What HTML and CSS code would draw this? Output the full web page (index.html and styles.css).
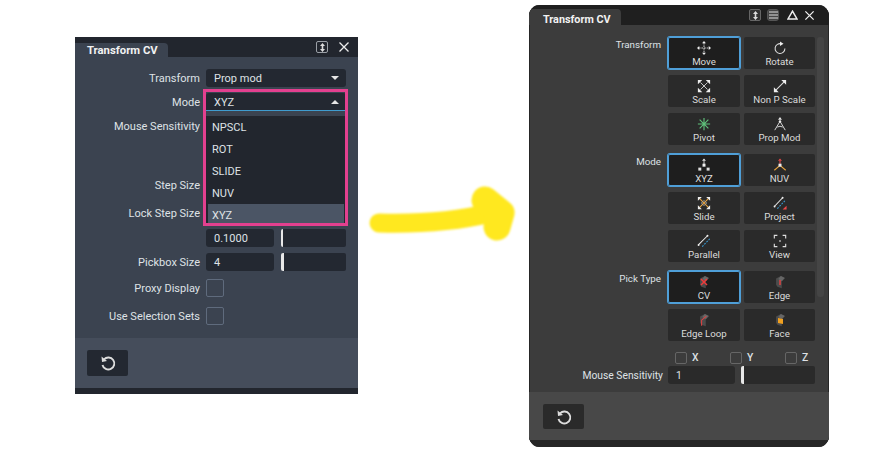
FILE: index.html
```html
<!DOCTYPE html>
<html lang="en">
<head>
    <meta charset="UTF-8">
    <title>Transform CV</title>
    <link rel="stylesheet" href="styles.css">
</head>
<body>
    <svg class="defs" width="0" height="0">
        <symbol id="i-move" viewBox="0 0 16 16">
            <path d="M8 2v12M2 8h12" stroke="#e8e8e8" stroke-width="1" stroke-dasharray="2 1"/>
            <path d="M8 0l2.200 2.600H5.800zM8 16l2.200-2.600H5.800zM0 8l2.600-2.200v4.400zM16 8l-2.600-2.200v4.400z" fill="#eee"/>
        </symbol>
        <symbol id="i-rotate" viewBox="0 0 16 16">
            <path d="M9.500 3.200A5.600 5.600 0 1 0 13.600 8.500" fill="none" stroke="#ddd" stroke-width="1.200"/>
            <path d="M8 0.500l4 2.700-4 2.500z" fill="#eee"/>
        </symbol>
        <symbol id="i-scale" viewBox="0 0 16 16">
            <path d="M4 4l8 8M12 4l-8 8" stroke="#ddd" stroke-width="1"/>
            <path d="M1 1h5L1 6zM15 1h-5l5 5zM1 15h5l-5-5zM15 15h-5l5-5z" fill="#eee"/>
        </symbol>
        <symbol id="i-nonp" viewBox="0 0 16 16">
            <path d="M3 13L13 3" stroke="#ddd" stroke-width="1.200"/>
            <path d="M15 1v5.500L9.500 1zM1 15V9.500L6.500 15z" fill="#eee"/>
        </symbol>
        <symbol id="i-pivot" viewBox="0 0 16 16">
            <path d="M8 1v14M1 8h14M3 3l10 10M13 3L3 13" stroke="#5fc07a" stroke-width="1.300"/>
        </symbol>
        <symbol id="i-prop" viewBox="0 0 16 16">
            <path d="M8 5L2 15M8 5l6 10M5 11.500q3-2 6 0" fill="none" stroke="#ddd" stroke-width="1.100"/>
            <path d="M8 0l2.200 3H5.800z" fill="#eee"/><circle cx="8" cy="5" r="1.400" fill="#eee"/>
        </symbol>
        <symbol id="i-xyz" viewBox="0 0 16 16">
            <path d="M8 0.500l2.200 2.500H5.800z" fill="#eee"/><path d="M8 3v5" stroke="#ddd"/>
            <rect x="6.300" y="6.500" width="3.400" height="3.400" fill="#eee"/>
            <rect x="1.500" y="11" width="3.400" height="3.400" fill="#ddd"/>
            <rect x="11" y="11" width="3.400" height="3.400" fill="#ddd"/>
        </symbol>
        <symbol id="i-nuv" viewBox="0 0 16 16">
            <path d="M8 0.500l2.200 2.500H5.800z" fill="#ee4a4a"/><path d="M8 3v5" stroke="#ee4a4a" stroke-width="1.200"/>
            <path d="M8 8.500L1.500 14M8 8.500l6.500 5.500" stroke="#e8a33d" stroke-width="1.300"/>
            <rect x="6.300" y="6.500" width="3.400" height="3.400" fill="#eee"/>
        </symbol>
        <symbol id="i-slide" viewBox="0 0 16 16">
            <path d="M3 3l10 10M13 3L3 13" stroke="#e8a33d" stroke-width="1.300"/>
            <path d="M1 1h4.500L1 5.500zM15 1h-4.500L15 5.500zM1 15h4.500L1 10.500zM15 15h-4.500L15 10.500z" fill="#eee"/>
            <path d="M5 8L8 5l3 3-3 3z" fill="none" stroke="#aaa"/>
        </symbol>
        <symbol id="i-project" viewBox="0 0 16 16">
            <path d="M1.500 12L11 2" stroke="#eee" stroke-width="1.200"/>
            <path d="M5 14.500L14 5" stroke="#3ba0dc" stroke-width="1.200" stroke-dasharray="2 1.500"/>
            <path d="M15.500 15.500v-4.500l-4.500 4.500z" fill="#ee4a4a"/>
            <circle cx="1.800" cy="12" r="1.100" fill="#eee"/><circle cx="11" cy="2" r="1.100" fill="#eee"/>
        </symbol>
        <symbol id="i-parallel" viewBox="0 0 16 16">
            <path d="M1.500 12.500L12 2" stroke="#eee" stroke-width="1.200"/>
            <path d="M6 14.500L15 5" stroke="#3ba0dc" stroke-width="1.200" stroke-dasharray="2 1.500"/>
            <circle cx="1.800" cy="12.500" r="1.100" fill="#eee"/><circle cx="12" cy="2" r="1.100" fill="#eee"/>
        </symbol>
        <symbol id="i-view" viewBox="0 0 16 16">
            <path d="M1.500 5V1.500H5M11 1.500h3.500V5M1.500 11v3.500H5M11 14.500h3.500V11" fill="none" stroke="#ddd" stroke-width="1.300"/>
            <rect x="7.200" y="7.200" width="1.600" height="1.600" fill="#eee"/>
        </symbol>
        <symbol id="i-block" viewBox="0 0 16 16">
            <path d="M3.500 4L9 1l4.500 2.500L10 7v8L5 13.500 3.500 11z" fill="#4c4c4c"/>
            <path d="M9 1l4.500 2.500L10 7 6 4.500z" fill="#666"/>
        </symbol>
        <symbol id="i-reset" viewBox="0 0 18 18">
            <path d="M5 5.300A6 6 0 1 1 3.500 11" fill="none" stroke="#ddd" stroke-width="1.900"/>
            <path d="M2.500 2.500l0.500 5.500 5-1z" fill="#ddd"/>
        </symbol>
    </svg>

    <!-- left window -->
    <div class="window window-left">
        <div class="titlebar">
            <div class="tab">Transform CV</div>
            <div class="title-icons">
                <span class="pin-box"><svg width="7" height="9" viewBox="0 0 7 9"><path d="M3.500 0l2.500 3H1zM3.500 9L1 6h5zM2.700 3h1.600v3H2.700z" fill="#ddd"/></svg></span>
                <svg width="12" height="12" viewBox="0 0 12 12"><path d="M1.500 1.500l9 9M10.500 1.500l-9 9" stroke="#eee" stroke-width="1.300"/></svg>
            </div>
        </div>
        <div class="form">
            <div class="row">
                <label>Transform</label>
                <div class="select">Prop mod<span class="caret"></span></div>
            </div>
            <div class="row">
                <label>Mode</label>
                <div class="select select-open">XYZ<span class="caret caret-up"></span>
                    <div class="highlight">
                        <ul class="options">
                            <li>NPSCL</li>
                            <li>ROT</li>
                            <li>SLIDE</li>
                            <li>NUV</li>
                            <li class="current">XYZ</li>
                        </ul>
                    </div>
                </div>
            </div>
            <div class="row row-sens"><label>Mouse Sensitivity</label></div>
            <div class="row row-step"><label>Step Size</label></div>
            <div class="row row-lock"><label>Lock Step Size</label></div>
            <div class="row">
                <label></label>
                <div class="input">0.1000</div>
                <div class="slider"></div>
            </div>
            <div class="row row-pick">
                <label>Pickbox Size</label>
                <div class="input">4</div>
                <div class="slider slider-thick"></div>
            </div>
            <div class="row row-check">
                <label>Proxy Display</label>
                <span class="check"></span>
            </div>
            <div class="row">
                <label>Use Selection Sets</label>
                <span class="check"></span>
            </div>
        </div>
        <div class="footer">
            <button class="reset"><svg width="18" height="18"><use href="#i-reset"/></svg></button>
        </div>
    </div>

    <!-- yellow marker arrow -->
    <svg class="arrow" width="150" height="66" viewBox="0 0 150 66">
        <path d="M11 45C50 46 90 43 122 35" fill="none" stroke="#ffe81f" stroke-width="19" stroke-linecap="round"/>
        <path d="M117 22L133 35L129 49" fill="none" stroke="#ffe81f" stroke-width="27" stroke-linecap="round" stroke-linejoin="round"/>
    </svg>

    <!-- right window -->
    <div class="window window-right">
        <div class="titlebar">
            <div class="tab">Transform CV</div>
            <div class="title-icons">
                <span class="pin-box"><svg width="7" height="9" viewBox="0 0 7 9"><path d="M3.500 0l2.500 3H1zM3.500 9L1 6h5zM2.700 3h1.600v3H2.700z" fill="#ddd"/></svg></span>
                <span class="pin-box menu-box"><svg width="9" height="8" viewBox="0 0 9 8"><path d="M0 1h9M0 4h9M0 7h9" stroke="#ddd" stroke-width="1.200"/></svg></span>
                <svg class="tri" width="11" height="10" viewBox="0 0 11 10"><path d="M5.500 1.200L10 9H1z" fill="none" stroke="#eee" stroke-width="1.500"/></svg>
                <svg width="11" height="11" viewBox="0 0 12 12"><path d="M1.500 1.500l9 9M10.500 1.500l-9 9" stroke="#eee" stroke-width="1.400"/></svg>
            </div>
        </div>
        <div class="tool-body">
            <div class="scrollbar"></div>
            <div class="tools">
                <span class="group-label">Transform</span>
                <div class="btn-grid">
                    <button class="tool selected"><svg><use href="#i-move"/></svg>Move</button>
                    <button class="tool"><svg><use href="#i-rotate"/></svg>Rotate</button>
                    <button class="tool"><svg><use href="#i-scale"/></svg>Scale</button>
                    <button class="tool"><svg><use href="#i-nonp"/></svg>Non P Scale</button>
                    <button class="tool"><svg><use href="#i-pivot"/></svg>Pivot</button>
                    <button class="tool"><svg><use href="#i-prop"/></svg>Prop Mod</button>
                </div>
                <span class="group-label">Mode</span>
                <div class="btn-grid">
                    <button class="tool selected"><svg><use href="#i-xyz"/></svg>XYZ</button>
                    <button class="tool"><svg><use href="#i-nuv"/></svg>NUV</button>
                    <button class="tool"><svg><use href="#i-slide"/></svg>Slide</button>
                    <button class="tool"><svg><use href="#i-project"/></svg>Project</button>
                    <button class="tool"><svg><use href="#i-parallel"/></svg>Parallel</button>
                    <button class="tool"><svg><use href="#i-view"/></svg>View</button>
                </div>
                <span class="group-label">Pick Type</span>
                <div class="btn-grid">
                    <button class="tool selected">
                        <span class="pick"><svg><use href="#i-block"/></svg><svg class="mark" viewBox="0 0 8 8"><path d="M1 1l6 6M7 1L1 7" stroke="#ee3b3b" stroke-width="1.500"/></svg></span>CV</button>
                    <button class="tool">
                        <span class="pick"><svg><use href="#i-block"/></svg><svg class="mark" viewBox="0 0 8 8"><path d="M4 2v5" stroke="#e04040" stroke-width="1.500"/></svg></span>Edge</button>
                    <button class="tool">
                        <span class="pick"><svg><use href="#i-block"/></svg><svg class="mark mark-loop" viewBox="0 0 10 14"><path d="M2 13V6l6-5" fill="none" stroke="#e04040" stroke-width="1.300"/></svg></span>Edge Loop</button>
                    <button class="tool">
                        <span class="pick"><svg><use href="#i-block"/></svg><svg class="mark" viewBox="0 0 8 8"><path d="M2 2l5 1v5l-5-1z" fill="#f0a020"/></svg></span>Face</button>
                </div>
            </div>
            <div class="axes">
                <span class="axis"><span class="check check-small"></span>X</span>
                <span class="axis"><span class="check check-small"></span>Y</span>
                <span class="axis"><span class="check check-small"></span>Z</span>
            </div>
            <div class="sens">
                <label>Mouse Sensitivity</label>
                <div class="input">1</div>
                <div class="slider slider-thick"></div>
            </div>
        </div>
        <div class="footer">
            <button class="reset"><svg width="18" height="18"><use href="#i-reset"/></svg></button>
        </div>
    </div>
</body>
</html>
```

FILE: styles.css
```css
* {
    box-sizing: border-box;
}

body {
    margin: 0;
    width: 870px;
    height: 450px;
    overflow: hidden;
    position: relative;
    background-color: #fff;
    font-family: Roboto, sans-serif;
    font-size: 11px;
    color: #dfe2e6;
}

.defs {
    position: absolute;
}

.window {
    position: absolute;
    display: flex;
    flex-direction: column;
}

.window-left {
    left: 75px;
    top: 37px;
    width: 283px;
    height: 357px;
    background-color: #3b4350;
    --bar: #22262e;
    --ctl: #232831;
    --foot: #454d5b;
    padding-bottom: 6px;
    box-shadow: inset 0 -6px 0 #22262e;
}

.window-right {
    left: 529px;
    top: 5px;
    width: 300px;
    height: 442px;
    background-color: #3c3c3c;
    --bar: #1f1f1f;
    --ctl: #2a2a2a;
    --foot: #484848;
    border-radius: 11px;
    overflow: hidden;
    padding-bottom: 7px;
    box-shadow: inset 0 -7px 0 #262626, inset 1px 0 0 #262626, inset -1px 0 0 #262626;
}

.titlebar {
    flex: none;
    height: 20px;
    display: flex;
    justify-content: space-between;
    align-items: flex-end;
    background-color: var(--bar);
}

.tab {
    height: 14px;
    width: 93px;
    padding-left: 12px;
    font-weight: 700;
    font-size: 11.3px;
    line-height: 16px;
    white-space: nowrap;
    color: #f2f2f2;
    background-color: #3b4350;
    border-top-right-radius: 4px;
}

.title-icons {
    display: flex;
    align-items: center;
    gap: 10px;
    height: 20px;
    padding-right: 8px;
    align-self: center;
}

.pin-box {
    display: flex;
    align-items: center;
    justify-content: center;
    width: 12px;
    height: 12px;
    border: 1px solid #9a9fa6;
    border-radius: 2px;
}

.form {
    flex: 1;
    padding-top: 12px;
}

.row {
    display: flex;
    align-items: center;
    height: 18px;
    margin-bottom: 6px;
}

.row label {
    width: 125px;
    margin-right: 6px;
    padding-top: 1px;
    text-align: right;
    flex: none;
}

.row-sens {
    margin-bottom: 41px;
}

.row-step {
    margin-bottom: 10px;
}

.row-lock {
    margin-bottom: 7px;
}

.row-pick {
    margin-bottom: 8px;
}

.row-check {
    margin-bottom: 10px;
}

.select {
    position: relative;
    width: 140px;
    height: 18px;
    padding-left: 8px;
    line-height: 20px;
    border-radius: 3px;
    background-color: var(--ctl);
}

.select-open {
    border-radius: 3px 3px 0 0;
    border-bottom: 1px solid #3f9ccf;
}

.caret {
    position: absolute;
    right: 7px;
    top: 7px;
    border-left: 4px solid transparent;
    border-right: 4px solid transparent;
    border-top: 4px solid #e6e6e6;
}

.caret-up {
    border-top: 0;
    border-bottom: 4px solid #e6e6e6;
}

/* pink annotation box round the open list */
.highlight {
    position: absolute;
    left: -3px;
    top: -4px;
    width: 145px;
    height: 137px;
    border: 3px solid #e3408f;
    padding-top: 24px;
}

.options {
    list-style: none;
    margin: 0;
    padding: 0 1px 0 2px;
    height: 107px;
    overflow: hidden;
    background-color: #22262e;
}

.options li {
    height: 22px;
    line-height: 24px;
    padding-left: 4px;
    color: #dfe2e6;
}

.options .current {
    background-color: #4b5565;
}

.input {
    width: 68px;
    height: 18px;
    line-height: 19px;
    padding-left: 8px;
    border-radius: 3px;
    background-color: var(--ctl);
    flex: none;
}

.slider {
    width: 65px;
    height: 18px;
    margin-left: 7px;
    border-radius: 2px;
    background-color: var(--ctl);
    border-left: 2px solid #e8e8e8;
    flex: none;
}

.slider-thick {
    border-left-width: 3px;
}

.check {
    width: 18px;
    height: 18px;
    border: 1px solid #5f6b7d;
    border-radius: 2px;
}

.footer {
    flex: none;
    height: 50px;
    padding: 12px;
    background-color: var(--foot);
}

.reset {
    display: flex;
    align-items: center;
    justify-content: center;
    width: 41px;
    height: 26px;
    padding: 0;
    border: none;
    border-radius: 2px;
    background-color: var(--ctl);
}

.arrow {
    position: absolute;
    left: 368px;
    top: 178px;
    filter: blur(1px);
}

/* right window */
.window-right .tab {
    width: 92px;
    height: 16px;
    padding-left: 14px;
    line-height: 21px;
    font-size: 10.8px;
    background-color: #3c3c3c;
}

.window-right .title-icons {
    padding-right: 14px;
    gap: 6px;
}

.window-right .tri {
    margin-left: 2px;
}

.window-right .pin-box {
    border-color: #666;
    background-color: #333;
}

.window-right .menu-box {
    border-color: #555;
    background-color: #444;
    border-radius: 3px;
}

.window-right .footer {
    height: 48px;
    padding: 12px 14px;
}

.window-right .reset {
    height: 25px;
}

.tool-body {
    position: relative;
    flex: 1;
    padding-top: 12px;
    padding-right: 14px;
    font-size: 10.3px;
}

.scrollbar {
    position: absolute;
    left: 288px;
    top: 12px;
    width: 7px;
    height: 260px;
    border-radius: 3px;
    background-color: #454545;
}

.tools {
    display: grid;
    grid-template-columns: 132px 147px;
    column-gap: 7px;
    row-gap: 9px;
    width: 286px;
}

.group-label {
    font-size: 9.8px;
    text-align: right;
    line-height: 14px;
    padding-top: 1px;
}

.btn-grid {
    display: grid;
    grid-template-columns: 72px 71px;
    grid-auto-rows: 32px;
    gap: 6px 4px;
}

.tool {
    display: flex;
    flex-direction: column;
    align-items: center;
    justify-content: flex-start;
    padding: 4px 0 0;
    border: none;
    border-radius: 2px;
    background-color: #2a2a2a;
    font-family: inherit;
    font-size: 9.7px;
    line-height: 14px;
    color: #dcdcdc;
}

.tool svg {
    width: 14px;
    height: 14px;
    flex: none;
}

.tool.selected {
    background-color: #1e1e1e;
    box-shadow: 0 0 0 1px #4f9fd8, inset 0 0 0 1px #4f9fd8;
}

.pick {
    position: relative;
    display: block;
    width: 14px;
    height: 14px;
}

.tool .mark {
    position: absolute;
    left: 3px;
    top: 3px;
    width: 8px;
    height: 8px;
}

.tool .mark-loop {
    height: 12px;
    top: 2px;
}

.axes {
    display: flex;
    margin: 11px 0 0 146px;
    height: 11px;
}

.axis {
    display: flex;
    flex: none;
    align-items: center;
    gap: 5px;
    width: 55px;
    line-height: 11px;
    font-weight: 500;
}

.check-small {
    width: 12px;
    height: 12px;
    border-color: #666;
}

.sens {
    display: flex;
    align-items: center;
    margin-top: 3px;
    height: 18px;
}

.sens label {
    width: 134px;
    margin-right: 5px;
    padding-top: 1px;
    text-align: right;
}

.sens .input {
    width: 67px;
}

.sens .slider {
    width: 74px;
    margin-left: 6px;
}
```
